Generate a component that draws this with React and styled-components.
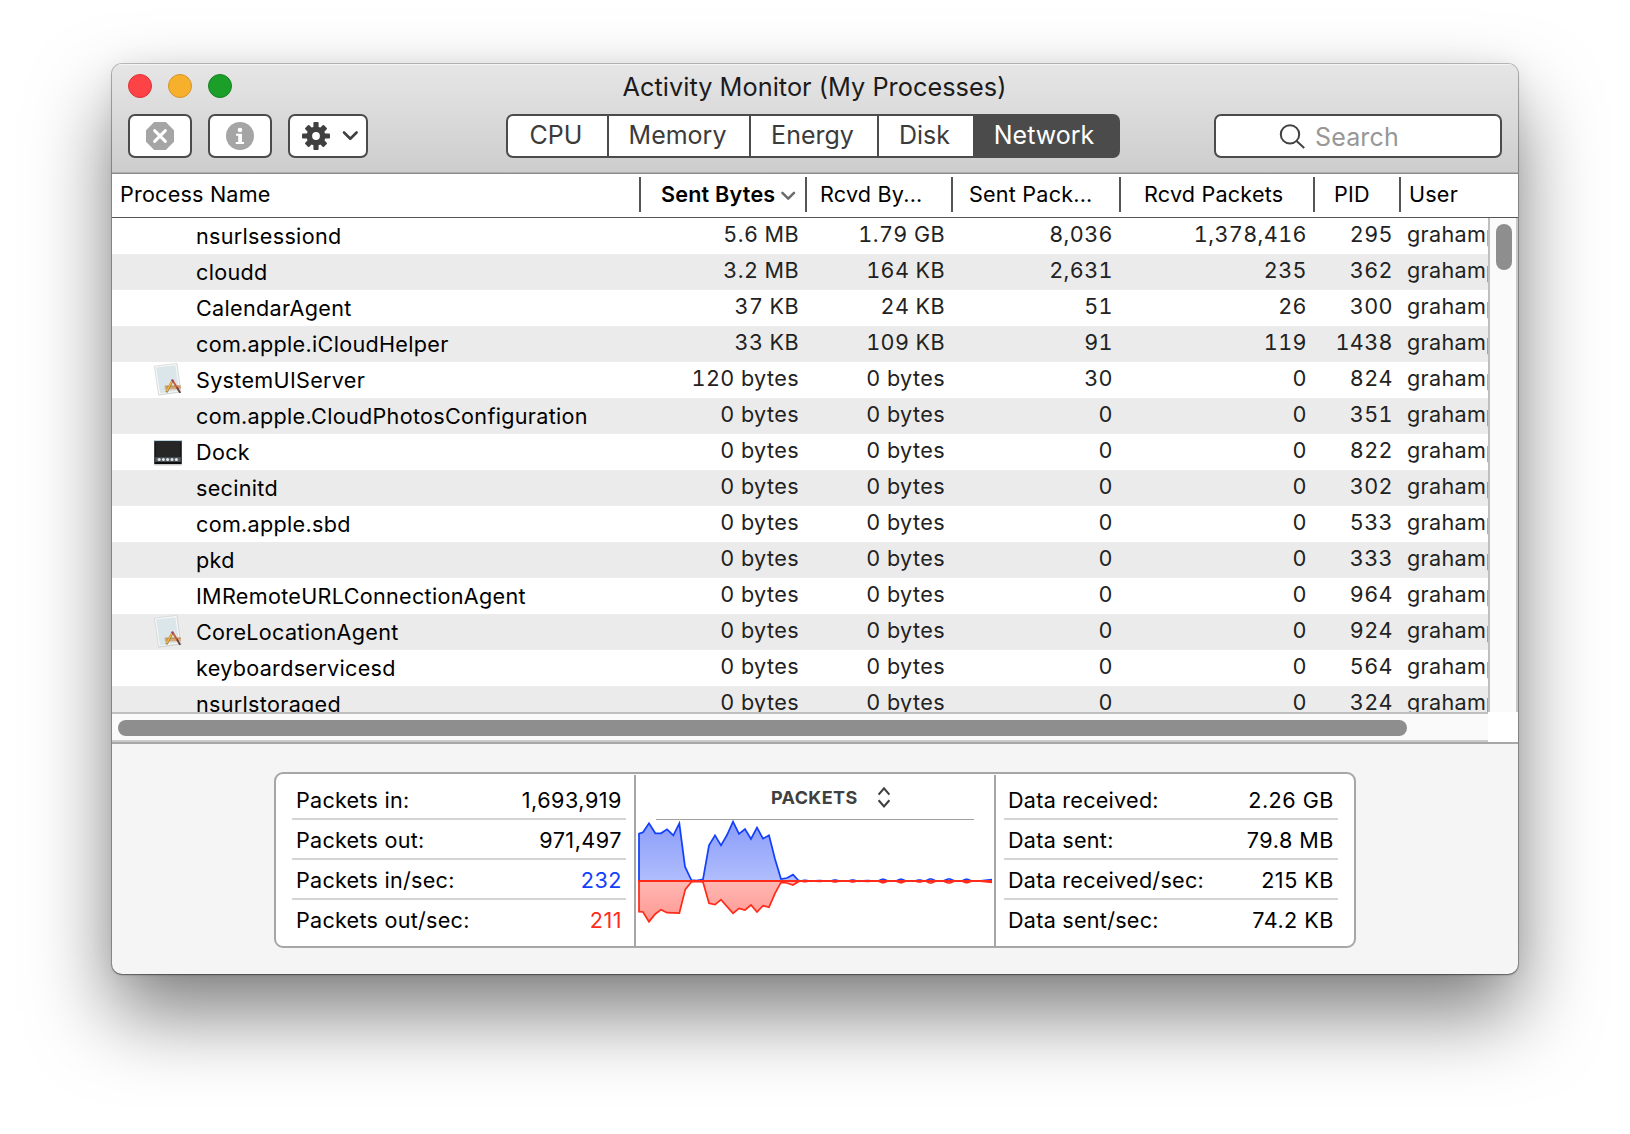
import React from "react";
import styled, { createGlobalStyle, css } from "styled-components";

const Global = createGlobalStyle`
  * { box-sizing: border-box; }
  body { margin: 0; background: #fff; }
`;

const COLUMNS = "529px 166px 146px 168px 194px 86px minmax(0, 1fr)";

const Desktop = styled.main`
  width: 1630px;
  height: 1134px;
  padding: 64px 112px 0;
  overflow: hidden;
  background: #fff;
  font-family: Inter, "Liberation Sans", sans-serif;
  font-size: 21.6px;
  letter-spacing: 0.3px;
  color: #000;
`;

const Window = styled.div`
  display: flex;
  flex-direction: column;
  width: 1406px;
  height: 910px;
  border-radius: 10px;
  overflow: hidden;
  background: #f5f5f5;
  box-shadow:
    0 0 0 1px rgba(0, 0, 0, 0.22),
    0 1px 2px rgba(0, 0, 0, 0.35),
    0 40px 80px rgba(0, 0, 0, 0.5),
    0 0 24px rgba(0, 0, 0, 0.06);
`;

const TitleArea = styled.header`
  height: 110px;
  flex: none;
  background: linear-gradient(#e6e6e6, #cdcdcd);
  border-bottom: 1px solid #8b8b8b;
  box-shadow: inset 0 1px 0 #f4f4f4, inset 0 -1px 0 #b0b0b0;
`;

const TitleRow = styled.div`
  display: grid;
  grid-template-columns: 1fr auto 1fr;
  align-items: center;
  height: 50px;
  padding: 0 17px 0 16px;
`;

const Lights = styled.div`
  display: flex;
  gap: 16px;
  padding-bottom: 6px;
`;

const Light = styled.span`
  width: 24px;
  height: 24px;
  border-radius: 50%;
  background: ${(p) => p.$fill};
  border: 1px solid ${(p) => p.$edge};
`;

const Title = styled.h1`
  margin: 0;
  height: 50px;
  font-size: 25.3px;
  font-weight: 400;
  line-height: 46px;
  letter-spacing: 0.03px;
  color: #1c1c1c;
`;

const ToolRow = styled.div`
  display: flex;
  align-items: center;
  height: 44px;
  padding: 0 16px;
`;

const frame = css`
  height: 44px;
  border: 2px solid #4b4b4b;
  border-radius: 7px;
  background: #fff;
`;

const ToolGroup = styled.div`
  display: flex;
  gap: 16px;
  width: 378px;
`;

const ToolButton = styled.button`
  ${frame}
  display: flex;
  align-items: center;
  justify-content: center;
  gap: 11px;
  width: ${(p) => p.$width || 64}px;
  padding: 0 0 0 ${(p) => p.$shift || 0}px;
`;

const Segments = styled.nav`
  ${frame}
  display: flex;
  width: 614px;
  margin-right: 94px;
  overflow: hidden;
  background: #4b4b4b;
`;

const Segment = styled.span`
  width: ${(p) => p.$width}px;
  height: 40px;
  padding-right: 3px;
  border-right: ${(p) => (p.$divided ? "2px solid #4b4b4b" : "0")};
  background: ${(p) => (p.$active ? "#4b4b4b" : "#fff")};
  color: ${(p) => (p.$active ? "#fff" : "#3b3b3b")};
  font-size: 25px;
  line-height: 38px;
  letter-spacing: 0;
  text-align: center;
`;

const SearchBox = styled.div`
  ${frame}
  display: flex;
  align-items: center;
  width: 288px;
  padding: 2px 0 0 62px;
  gap: 9px;
  font-size: 25px;
  letter-spacing: 0.15px;
  line-height: 39px;
  color: #979797;
`;

const HeaderRow = styled.div`
  display: grid;
  grid-template-columns: ${COLUMNS};
  flex: none;
  height: 44px;
  padding: 3px 0 5px;
  background: #fff;
  border-bottom: 1px solid #555;
`;

const HeaderCell = styled.div`
  display: flex;
  align-items: center;
  gap: 5px;
  height: 35px;
  padding-left: ${(p) => p.$inset}px;
  border-right: ${(p) => (p.$last ? "0" : "2px solid #555")};
  font-weight: ${(p) => (p.$sorted ? 600 : 400)};
  line-height: 35px;
  letter-spacing: 0.2px;
  white-space: nowrap;
`;

const Body = styled.div`
  display: flex;
  flex: none;
  height: 494px;
`;

const Rows = styled.div`
  flex: 1;
  min-width: 0;
  overflow: hidden;
  background: #fff;
`;

const Row = styled.div`
  display: grid;
  grid-template-columns: ${COLUMNS};
  height: 36px;
  &:nth-child(even) { background: #ebebeb; }
`;

const NameCell = styled.div`
  display: flex;
  align-items: center;
  gap: 12px;
  height: 36px;
  padding-left: 40px;
  line-height: 36px;
`;

const IconSlot = styled.span`
  display: block;
  flex: none;
  width: 32px;
  height: 36px;
  svg { display: block; }
`;

const ValueCell = styled.div`
  height: 36px;
  padding-right: 8px;
  line-height: 32px;
  text-align: right;
  letter-spacing: 0.4px;
  font-variant-numeric: tabular-nums;
  color: #222;
`;

const UserCell = styled.div`
  padding-left: 6px;
  line-height: 32px;
  overflow: hidden;
  color: #222;
`;

const VerticalTrack = styled.div`
  display: flex;
  justify-content: center;
  width: 30px;
  padding: 6px 0 0 2px;
  background: #fafafa;
  border-left: 2px solid #bfbfbf;
  border-right: 2px solid #c8c8c8;
`;

const VerticalThumb = styled.div`
  width: 16px;
  height: 46px;
  border-radius: 8px;
  background: #8e8e8e;
`;

const BottomBar = styled.div`
  flex: none;
  height: 32px;
  padding-right: 30px;
  background: #fff;
  border-bottom: 2px solid #a8a8a8;
`;

const HorizontalTrack = styled.div`
  height: 30px;
  padding: 6px;
  background: #fafafa;
  border-top: 2px solid #bfbfbf;
  border-bottom: 2px solid #cacaca;
`;

const HorizontalThumb = styled.div`
  width: 1289px;
  height: 16px;
  border-radius: 8px;
  background: #8e8e8e;
`;

const Footer = styled.section`
  display: flex;
  justify-content: center;
  align-items: flex-start;
  padding-top: 28px;
`;

const Card = styled.div`
  display: grid;
  grid-template-columns: 360px 360px 1fr;
  width: 1082px;
  height: 176px;
  padding-top: 1px;
  border: 2px solid #a6a6a6;
  border-radius: 9px;
  background: #fff;
`;

const StatList = styled.div`
  padding: ${(p) => (p.$right ? "5px 16px 0 8px" : "5px 8px 0 16px")};
  border-right: ${(p) => (p.$right ? "0" : "2px solid #a6a6a6")};
`;

const Stat = styled.div`
  display: flex;
  justify-content: space-between;
  height: 40px;
  padding: 2px 4px 0 4px;
  line-height: 36px;
  border-bottom: 2px solid #d5d5d5;
  letter-spacing: 0.25px;
  &:last-child { border-bottom: 0; }
`;

const StatValue = styled.span`
  color: ${(p) => p.$color || "#000"};
  letter-spacing: 0.5px;
`;

const ChartPane = styled.div`
  border-right: 2px solid #a6a6a6;
  svg { display: block; }
`;

const ChartHead = styled.div`
  display: flex;
  align-items: center;
  gap: 18px;
  height: 45px;
  margin: 0 20px;
  padding-left: 115px;
  border-bottom: 1px solid #a0a0a0;
  font-size: 18px;
  font-weight: 700;
  line-height: 45px;
  letter-spacing: 0.4px;
  color: #404040;
`;

const StopIcon = () => (
  <svg width="28" height="28" viewBox="0 0 28 28">
    <path d="M8.2 0h11.6L28 8.2v11.6L19.8 28H8.2L0 19.8V8.2z" fill="#a5a5a5" />
    <path d="M8.6 8.6l10.8 10.8M19.4 8.6L8.6 19.4" stroke="#fff" strokeWidth="2.9" strokeLinecap="round" />
  </svg>
);

const InfoIcon = () => (
  <svg width="28" height="28" viewBox="0 0 28 28">
    <circle cx="14" cy="14" r="14" fill="#a5a5a5" />
    <circle cx="14" cy="8" r="2.3" fill="#fff" />
    <path d="M10 11.8h6v8.2h2v2h-8.2v-2h2.4v-6.2H10z" fill="#fff" />
  </svg>
);

const GearIcon = () => (
  <svg width="28" height="28" viewBox="-14 -14 28 28" fill="#404040">
    {[0, 45, 90, 135].map((a) => (
      <rect key={a} x={a % 90 ? -2.9 : -2.6} y={a % 90 ? -13.3 : -14} width={a % 90 ? 5.8 : 5.2} height={a % 90 ? 26.6 : 28} rx="1" transform={`rotate(${a})`} />
    ))}
    <circle r="9.5" />
    <circle r="3.9" fill="#fff" />
  </svg>
);

const ChevronIcon = () => (
  <svg width="18" height="12" viewBox="0 0 18 12">
    <path d="M3 2.5l6.3 6.2 6.3-6.2" fill="none" stroke="#404040" strokeWidth="2.6" strokeLinecap="round" strokeLinejoin="round" />
  </svg>
);

const SortIcon = () => (
  <svg width="16" height="12" viewBox="0 0 16 12">
    <path d="M2.4 3.8l5.8 5.8L14 3.8" fill="none" stroke="#6b6b6b" strokeWidth="2.5" strokeLinecap="round" strokeLinejoin="round" />
  </svg>
);

const SearchIcon = () => (
  <svg width="28" height="28" viewBox="0 0 28 28" fill="none" stroke="#424242" strokeWidth="2">
    <circle cx="12" cy="11.4" r="9.2" />
    <path d="M18.6 18L26.2 25" />
  </svg>
);

const StepperIcon = () => (
  <svg width="16" height="24" viewBox="0 0 16 24" fill="none" stroke="#404040" strokeWidth="2.1">
    <path d="M2.6 9.6L8 3.4l5.4 6.2M2.6 15.2L8 21.4l5.4-6.2" />
  </svg>
);

const AppIcon = () => (
  <svg width="32" height="36" viewBox="0.6 0 32 36">
    <path d="M3.2 4.8l22.6-3 4.2 28.8-22.6 3z" fill="#999" opacity=".35" />
    <path d="M3 4.2l22.4-2.8 4 28.4-22.2 3z" fill="#f6f8f8" stroke="#cfd3d4" strokeWidth=".7" />
    <path d="M4.8 5.6l19.2-2.4 3.6 25.4-19 2.6z" fill="#dae6ea" />
    <path d="M13.4 23.4l16-.2v4l-16 .2z" fill="#d3a979" />
    <path d="M14 24.4h15" stroke="#b98d5c" strokeWidth=".8" />
    <path d="M21.2 18.4L15 30.2" stroke="#7d5a2c" strokeWidth="2.2" />
    <path d="M20.6 19.2L15.2 29.6" stroke="#f3bc3c" strokeWidth="1.5" />
    <path d="M21.2 18.2l7.4 12.4" stroke="#c2583c" strokeWidth="1.8" />
    <path d="M25.6 25.4l3.2 5.4" stroke="#5d4441" strokeWidth="1.6" />
    <circle cx="21" cy="18.4" r="1.1" fill="#a03a62" />
  </svg>
);

const DockIcon = () => (
  <svg width="32" height="36" viewBox="0 0 32 36">
    <rect x="2" y="7.4" width="28" height="24.2" rx="1" fill="#777" opacity=".4" />
    <rect x="2.3" y="6.4" width="27.4" height="23.6" fill="#0e0e0e" />
    <path d="M2.3 6.6h27.4" stroke="#c3dbe4" strokeWidth="1.1" />
    <rect x="3.6" y="7.8" width="24.8" height="15.4" fill="#262626" />
    <rect x="3.2" y="23.2" width="25.6" height="4.6" fill="#555b60" />
    {[7.2, 11.4, 15.6, 20, 24.4].map((x) => (
      <circle key={x} cx={x} cy="25.5" r="1.5" fill="#dfe7ec" />
    ))}
  </svg>
);

const icons = { app: AppIcon, dock: DockIcon };

const BLUE_POINTS = "57,221 69,217 87,190 106,220 123,220 141,208 160,226 178,190 195,320 214,360 230,362 249,358 267,256 285,226 303,256 321,225 339,185 357,222 375,207 393,237 411,203 429,236 447,226 465,297 483,357 501,354 519,344 535,361";
const RED_POINTS = "57,455 69,456 87,485 106,462 123,449 141,458 178,459 196,388 214,366 230,364 249,366 267,430 285,434 303,419 339,460 357,445 375,450 393,435 411,456 429,437 447,442 465,400 483,367 501,369 519,375 535,365";
const BLIPS = [[555, 13, 2], [598, 18, 1.5], [645, 13, 3], [698, 13, 3], [742, 18, 1.5], [789, 15, 5], [843, 15, 5], [898, 14, 3], [932, 16, 6], [987, 18, 6], [1040, 15, 5]];
const tail = (sign) =>
  BLIPS.map(([x, w, h]) => `${x - w},363 ${x - 3},${363 + sign * h} ${x + 3},${363 + sign * h} ${x + w},363`).join(" ") + ` 1075,363 1116,${363 + sign * 4}`;

const TrafficChart = () => (
  <svg width="358" height="126" viewBox="48 180 1074 378">
    <defs>
      <linearGradient id="in" x1="0" y1="0" x2="0" y2="1">
        <stop offset="0" stopColor="#8b9df9" />
        <stop offset="1" stopColor="#b0bdfd" />
      </linearGradient>
      <linearGradient id="out" x1="0" y1="0" x2="0" y2="1">
        <stop offset="0" stopColor="#ffb8b3" />
        <stop offset="1" stopColor="#ff9892" />
      </linearGradient>
    </defs>
    <polygon points={`57,363 ${BLUE_POINTS} 535,363`} fill="url(#in)" />
    <polygon points={`57,363 ${RED_POINTS} 535,363`} fill="url(#out)" />
    <polyline points={`57,363 ${BLUE_POINTS} ${tail(-1)}`} fill="none" stroke="#1340fb" strokeWidth="5.2" />
    <polyline points={`57,363 ${RED_POINTS} ${tail(1)}`} fill="none" stroke="#ff2a1a" strokeWidth="5.2" />
    <path d="M54 363H1116" stroke="#ff2a1a" strokeWidth="6" />
  </svg>
);

const tabs = [
  { label: "CPU", width: 101, divided: true },
  { label: "Memory", width: 142, divided: true },
  { label: "Energy", width: 128, divided: true },
  { label: "Disk", width: 94 },
  { label: "Network", width: 145, active: true },
];

const headers = [
  { label: "Process Name", inset: 8 },
  { label: "Sent Bytes", inset: 20, sorted: true },
  { label: "Rcvd By...", inset: 13 },
  { label: "Sent Pack...", inset: 16 },
  { label: "Rcvd Packets", inset: 23 },
  { label: "PID", inset: 19 },
  { label: "User", inset: 8 },
];

const Z = "0 bytes";
const processes = [
  ["nsurlsessiond", "5.6 MB", "1.79 GB", "8,036", "1,378,416", "295"],
  ["cloudd", "3.2 MB", "164 KB", "2,631", "235", "362"],
  ["CalendarAgent", "37 KB", "24 KB", "51", "26", "300"],
  ["com.apple.iCloudHelper", "33 KB", "109 KB", "91", "119", "1438"],
  ["SystemUIServer", "120 bytes", Z, "30", "0", "824", "app"],
  ["com.apple.CloudPhotosConfiguration", Z, Z, "0", "0", "351"],
  ["Dock", Z, Z, "0", "0", "822", "dock"],
  ["secinitd", Z, Z, "0", "0", "302"],
  ["com.apple.sbd", Z, Z, "0", "0", "533"],
  ["pkd", Z, Z, "0", "0", "333"],
  ["IMRemoteURLConnectionAgent", Z, Z, "0", "0", "964"],
  ["CoreLocationAgent", Z, Z, "0", "0", "924", "app"],
  ["keyboardservicesd", Z, Z, "0", "0", "564"],
  ["nsurlstoraged", Z, Z, "0", "0", "324"],
];

const packetStats = [
  ["Packets in:", "1,693,919"],
  ["Packets out:", "971,497"],
  ["Packets in/sec:", "232", "#1340fb"],
  ["Packets out/sec:", "211", "#ff2a1a"],
];
const dataStats = [
  ["Data received:", "2.26 GB"],
  ["Data sent:", "79.8 MB"],
  ["Data received/sec:", "215 KB"],
  ["Data sent/sec:", "74.2 KB"],
];

function Stats({ items, right }) {
  return (
    <StatList $right={right}>
      {items.map(([label, value, color]) => (
        <Stat key={label}>
          <span>{label}</span>
          <StatValue $color={color}>{value}</StatValue>
        </Stat>
      ))}
    </StatList>
  );
}

function ProcessRow({ data }) {
  const [name, sent, received, sentPackets, receivedPackets, pid, icon] = data;
  const Icon = icons[icon];
  return (
    <Row>
      <NameCell>
        <IconSlot>{Icon && <Icon />}</IconSlot>
        <span>{name}</span>
      </NameCell>
      <ValueCell>{sent}</ValueCell>
      <ValueCell>{received}</ValueCell>
      <ValueCell>{sentPackets}</ValueCell>
      <ValueCell>{receivedPackets}</ValueCell>
      <ValueCell>{pid}</ValueCell>
      <UserCell>grahamp</UserCell>
    </Row>
  );
}

export default function App() {
  return (
    <Desktop>
      <Global />
      <Window>
        <TitleArea>
          <TitleRow>
            <Lights>
              <Light $fill="#fe4347" $edge="#dd3237" />
              <Light $fill="#f6b02c" $edge="#d6932a" />
              <Light $fill="#1c9f28" $edge="#158020" />
            </Lights>
            <Title>Activity Monitor (My Processes)</Title>
          </TitleRow>
          <ToolRow>
            <ToolGroup>
              <ToolButton><StopIcon /></ToolButton>
              <ToolButton><InfoIcon /></ToolButton>
              <ToolButton $width={80} $shift={4}><GearIcon /><ChevronIcon /></ToolButton>
            </ToolGroup>
            <Segments>
              {tabs.map((t) => (
                <Segment key={t.label} $width={t.width} $divided={t.divided} $active={t.active}>{t.label}</Segment>
              ))}
            </Segments>
            <SearchBox><SearchIcon /><span>Search</span></SearchBox>
          </ToolRow>
        </TitleArea>
        <HeaderRow>
          {headers.map((h, i) => (
            <HeaderCell key={h.label} $inset={h.inset} $sorted={h.sorted} $last={i === headers.length - 1}>
              <span>{h.label}</span>
              {h.sorted && <SortIcon />}
            </HeaderCell>
          ))}
        </HeaderRow>
        <Body>
          <Rows>
            {processes.map((p) => <ProcessRow key={p[0]} data={p} />)}
          </Rows>
          <VerticalTrack><VerticalThumb /></VerticalTrack>
        </Body>
        <BottomBar>
          <HorizontalTrack><HorizontalThumb /></HorizontalTrack>
        </BottomBar>
        <Footer>
          <Card>
            <Stats items={packetStats} />
            <ChartPane>
              <ChartHead><span>PACKETS</span><StepperIcon /></ChartHead>
              <TrafficChart />
            </ChartPane>
            <Stats items={dataStats} right />
          </Card>
        </Footer>
      </Window>
    </Desktop>
  );
}
